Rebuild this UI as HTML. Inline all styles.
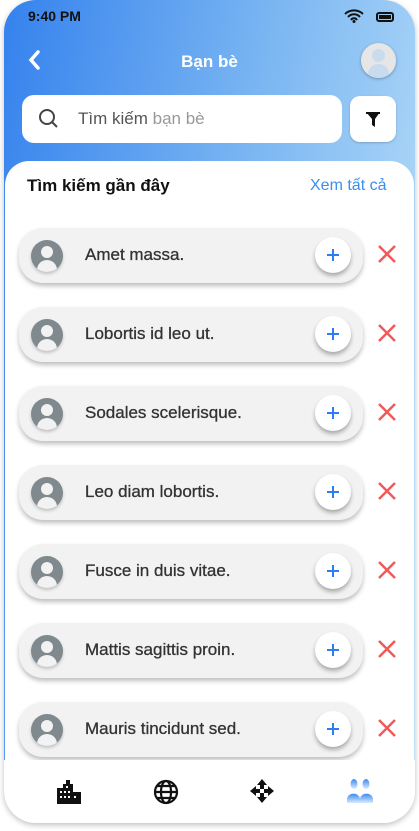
<!DOCTYPE html>
<html><head><meta charset="utf-8"><style>
*{margin:0;padding:0;box-sizing:border-box}
body{width:419px;height:831px;background:#fff;font-family:"Liberation Sans",sans-serif;position:relative;overflow:hidden}
.phone{position:absolute;left:4px;top:0;width:411px;height:823px;border-radius:32px;overflow:hidden;background:linear-gradient(100deg,#3582ee 0%,#7cb7f2 50%,#c4e6fa 100%);box-shadow:0 2px 6px rgba(0,0,0,.25)}
.abs{position:absolute}
.card{left:1px;top:161px;width:409px;height:700px;background:#fff;border-radius:24px}
.row{position:absolute;left:15px;width:344px;height:55px;background:#f2f2f2;border-radius:24px;box-shadow:0 3px 5px rgba(0,0,0,.25)}
.av{position:absolute;left:12px;top:12px;width:32px;height:32px;border-radius:50%;background:#7f898e;overflow:hidden;box-shadow:0 2px 3px rgba(0,0,0,.2)}
.av:before{content:"";position:absolute;left:10px;top:6px;width:12px;height:12px;border-radius:50%;background:#f2f2f2}
.av:after{content:"";position:absolute;left:6px;top:20px;width:20px;height:14px;border-radius:10px 10px 0 0;background:#f2f2f2}
.nm{position:absolute;left:66px;top:17px;font-size:17px;color:#333;-webkit-text-stroke:0.3px #333}
.pl{position:absolute;left:296px;top:9px;width:36px;height:36px;border-radius:50%;background:#fff;box-shadow:0 3px 4px rgba(0,0,0,.3)}
.pl:before{content:"";position:absolute;left:12px;top:17px;width:12px;height:2.4px;background:#2d7ef0}
.pl:after{content:"";position:absolute;left:16.8px;top:12px;width:2.4px;height:12px;background:#2d7ef0}
</style></head><body>
<div class="phone">
<div class="abs" style="left:24px;top:8px;font-weight:bold;font-size:14px;color:#111">9:40 PM</div>
<svg class="abs" style="left:340px;top:9px" width="20" height="14" viewBox="0 0 20 14"><path d="M1 5a13 13 0 0 1 18 0M4 8a8 8 0 0 1 12 0M7 11a3.5 3.5 0 0 1 6 0" stroke="#111" stroke-width="2" fill="none"/><circle cx="10" cy="12.5" r="1.5" fill="#111"/></svg>
<div class="abs" style="left:372px;top:12px;width:18px;height:10px;border:2px solid #111;border-radius:3px"><div style="margin:1px;height:4px;background:#111"></div></div>
<svg class="abs" style="left:22px;top:49px" width="16" height="22" viewBox="0 0 16 22"><path d="M12 3L5 11l7 8" stroke="#fff" stroke-width="3.5" fill="none" stroke-linecap="round"/></svg>
<div class="abs" style="left:0;width:411px;text-align:center;top:52px;color:#fff;font-weight:bold;font-size:17px">Bạn bè</div>
<div class="abs" style="left:357px;top:43px;width:35px;height:35px;border-radius:50%;background:#e6e6e6;box-shadow:0 1px 3px rgba(0,0,0,.3);overflow:hidden"><div class="abs" style="left:11px;top:6px;width:13px;height:13px;border-radius:50%;background:#c9dced"></div><div class="abs" style="left:7px;top:21px;width:21px;height:15px;border-radius:10px 10px 0 0;background:#c9dced"></div></div>
<div class="abs" style="left:18px;top:95px;width:320px;height:48px;background:#fff;border-radius:12px"></div>
<svg class="abs" style="left:34px;top:108px" width="22" height="22" viewBox="0 0 22 22"><circle cx="9" cy="9" r="7" stroke="#444" stroke-width="2" fill="none"/><path d="M14 14l5 5" stroke="#444" stroke-width="2"/></svg>
<div class="abs" style="left:74px;top:109px;font-size:17px;color:#555">Tìm kiếm <span style="color:#999">bạn bè</span></div>
<div class="abs" style="left:346px;top:96px;width:46px;height:46px;background:#fff;border-radius:10px;box-shadow:0 1px 2px rgba(0,0,0,.2)"></div>
<svg class="abs" style="left:361px;top:111px" width="16" height="17" viewBox="0 0 16 17"><path d="M1 1h14l-5 7v8l-3-2V8z" fill="#111"/><rect x="1" y="1" width="14" height="2" fill="#111"/></svg>
<div class="abs card"></div>
<div class="abs" style="left:23px;top:176px;font-weight:bold;font-size:17px;color:#111">Tìm kiếm gần đây</div>
<div class="abs" style="left:306px;top:177px;font-size:16px;color:#3a8ef0">Xem tất cả</div>
<div class="row" style="top:228px"><div class="av"></div><div class="nm">Amet massa.</div><div class="pl"></div></div>
<div class="row" style="top:307px"><div class="av"></div><div class="nm">Lobortis id leo ut.</div><div class="pl"></div></div>
<div class="row" style="top:386px"><div class="av"></div><div class="nm">Sodales scelerisque.</div><div class="pl"></div></div>
<div class="row" style="top:465px"><div class="av"></div><div class="nm">Leo diam lobortis.</div><div class="pl"></div></div>
<div class="row" style="top:544px"><div class="av"></div><div class="nm">Fusce in duis vitae.</div><div class="pl"></div></div>
<div class="row" style="top:623px"><div class="av"></div><div class="nm">Mattis sagittis proin.</div><div class="pl"></div></div>
<div class="row" style="top:702px"><div class="av"></div><div class="nm">Mauris tincidunt sed.</div><div class="pl"></div></div>
<svg class="abs" style="left:0;top:0;overflow:visible" width="411" height="823"><g stroke="#f05a5a" stroke-width="2.5"><path d="M375 246l16 16M391 246l-16 16"/><path d="M375 325l16 16M391 325l-16 16"/><path d="M375 404l16 16M391 404l-16 16"/><path d="M375 483l16 16M391 483l-16 16"/><path d="M375 562l16 16M391 562l-16 16"/><path d="M375 641l16 16M391 641l-16 16"/><path d="M375 720l16 16M391 720l-16 16"/></g></svg>
<div class="abs" style="left:0;top:760px;width:411px;height:63px;background:#fff"></div>
<svg class="abs" style="left:52px;top:779px" width="26" height="25" viewBox="0 0 26 25"><path d="M1 9h6V5h3V1h4v4h3v8h8v12H1z" fill="#111"/><g fill="#fff"><rect x="4" y="12" width="2" height="2"/><rect x="8" y="12" width="2" height="2"/><rect x="12" y="12" width="2" height="2"/><rect x="4" y="17" width="2" height="2"/><rect x="8" y="17" width="2" height="2"/><rect x="12" y="17" width="2" height="2"/><rect x="18" y="17" width="2" height="2"/><rect x="10" y="7" width="2" height="2"/></g></svg>
<svg class="abs" style="left:149px;top:779px" width="26" height="26" viewBox="0 0 26 26" fill="none" stroke="#111" stroke-width="2.2"><circle cx="13" cy="13" r="11"/><ellipse cx="13" cy="13" rx="5" ry="11"/><path d="M2 13h22M4 7h18M4 19h18"/></svg>
<svg class="abs" style="left:246px;top:779px" width="24" height="24" viewBox="0 0 24 24" fill="#111"><path d="M12 0l5 6h-3v4h-4V6H7zM12 24l-5-6h3v-4h4v4h3zM0 12l6-5v3h4v4H6v3zM24 12l-6 5v-3h-4v-4h4V7z"/></svg>
<svg class="abs" style="left:343px;top:779px" width="26" height="24" viewBox="0 0 26 24"><defs><linearGradient id="g" x1="0" y1="0" x2="0" y2="1"><stop offset="0" stop-color="#3d8bf0"/><stop offset="1" stop-color="#d9eafc"/></linearGradient></defs><g fill="url(#g)"><ellipse cx="7" cy="5" rx="3.5" ry="5"/><ellipse cx="19" cy="5" rx="3.5" ry="5"/><path d="M0 24v-5a7 7 0 0 1 13 0v5zM13 24v-5a7 7 0 0 1 13 0v5z"/></g></svg>
</div>
</body></html>
